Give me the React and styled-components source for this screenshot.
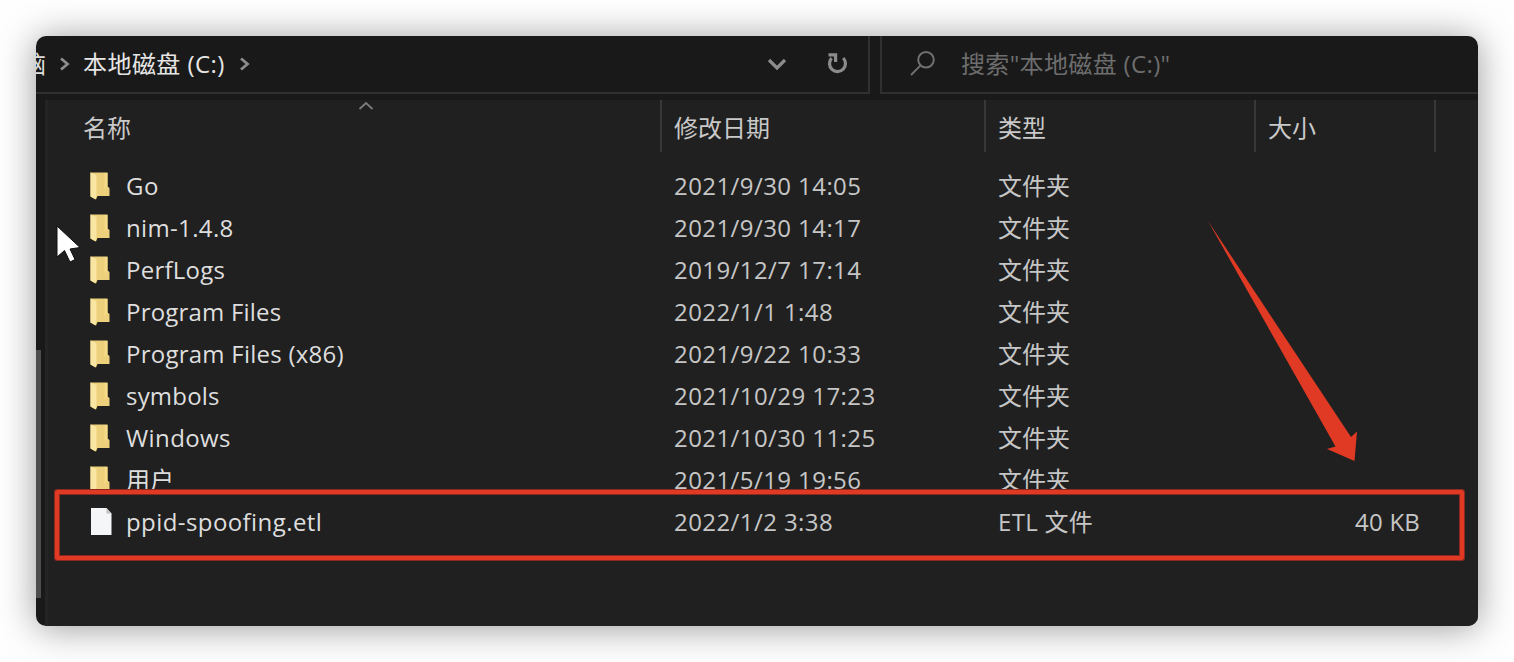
import React from 'react';
import styled, { createGlobalStyle } from 'styled-components';

const GlobalStyle = createGlobalStyle`
  * { box-sizing: border-box; }
  body {
    margin: 0;
    background: #fefefe;
    font-family: "Open Sans", "Noto Sans CJK SC", sans-serif;
  }
  svg { display: block; flex: none; }
`;

const Page = styled.div`
  height: 662px;
  padding: 36px;
  overflow: hidden;
`;

const Window = styled.main`
  position: relative;
  height: 590px;
  border-radius: 10px;
  box-shadow: 0 2px 36px rgba(0, 0, 0, 0.4);
`;

const Frame = styled.div`
  display: flex;
  flex-direction: column;
  height: 100%;
  overflow: hidden;
  border-radius: 10px;
  background: #191919;
`;

const Toolbar = styled.header`
  display: flex;
  gap: 10px;
  height: 58px;
  margin-bottom: 6px;
`;

const AddressBar = styled.nav`
  display: flex;
  align-items: center;
  width: 834px;
  height: 58px;
  padding-right: 19px;
  border-right: 2px solid #303030;
  border-bottom: 2px solid #303030;
`;

const SearchBox = styled.div`
  display: flex;
  flex: 1;
  align-items: center;
  height: 58px;
  padding-left: 27px;
  border-left: 2px solid #303030;
  border-bottom: 2px solid #303030;
`;

const Text = styled.span`
  display: block;
  font-size: 24px;
  line-height: 32px;
  white-space: pre;
  color: ${(p) => p.$color || '#dedede'};
  letter-spacing: ${(p) => p.$track || 0}px;
`;

const ParentCrumb = styled.div`
  display: flex;
  justify-content: flex-end;
  width: 10px;
  margin-right: 13px;
  overflow: hidden;
`;

const CurrentCrumb = styled.div`
  width: 148px;
  margin: 0 8px 0 12px;
`;

const Actions = styled.div`
  display: flex;
  align-items: center;
  gap: 40px;
  margin-left: auto;
`;

const SearchHint = styled.div`
  margin-left: 24px;
`;

const Body = styled.div`
  display: flex;
  flex: 1;
`;

const Rail = styled.div`
  width: 9px;
  padding-top: 250px;
`;

const Thumb = styled.div`
  width: 5px;
  height: 248px;
  background: #4d4d4d;
`;

const Pane = styled.section`
  flex: 1;
  border-left: 3px solid #242424;
  background: #202020;
`;

const COLUMNS = '614px 324px 270px 180px';

const HeaderRow = styled.div`
  display: grid;
  grid-template-columns: ${COLUMNS};
  height: 52px;
  margin-bottom: 13px;
`;

const HeaderCell = styled.div`
  position: relative;
  padding: 12px 0 0 ${(p) => (p.$first ? 35 : 12)}px;
  border-right: 2px solid #383838;
`;

const SortMark = styled.div`
  position: absolute;
  top: 1px;
  left: 309px;
`;

const Row = styled.div`
  display: grid;
  grid-template-columns: ${COLUMNS};
  align-items: center;
  height: 42px;
`;

const NameCell = styled.div`
  display: flex;
  align-items: center;
  gap: 14px;
  padding-left: 42px;
`;

const Cell = styled.div`
  padding-left: 12px;
`;

const SizeCell = styled.div`
  display: flex;
  justify-content: flex-end;
  padding-right: 16px;
`;

const Highlight = styled.div`
  position: absolute;
  left: 19px;
  top: 454px;
  width: 1409px;
  height: 70px;
  border: 4px solid #e03a24;
  border-radius: 2px;
  box-shadow: 0 0 0 1px #8a291f, inset 0 0 0 1px #8a291f;
`;

const Arrow = styled.svg`
  position: absolute;
  left: 1164px;
  top: 180px;
`;

const Pointer = styled.svg`
  position: absolute;
  left: 18px;
  top: 187px;
`;

function Chevron() {
  return (
    <svg width="12" height="18" viewBox="0 0 12 18" fill="none" stroke="#8c8c8c" strokeWidth="2.8">
      <path d="M2 3.5 L8.5 9 L2 14.5" />
    </svg>
  );
}

function FolderIcon() {
  return (
    <svg width="22" height="30" viewBox="0 0 22 30">
      <path d="M0.5 1.5 H17.5 V15.5 L19.5 17 V25 H7.5 L6 28.5 L0.5 25.5 Z" fill="#edd07b" />
      <path d="M0.5 1.5 L6.5 4 V23 L5.5 28.5 L0.5 25.5 Z" fill="#f9e6a2" />
      <path d="M14.5 2 H17.5 V15.5 L14.5 19 Z" fill="#f5da88" />
    </svg>
  );
}

function FileIcon() {
  return (
    <svg width="22" height="30" viewBox="0 0 22 30">
      <path d="M1 1 H16.5 L21.5 6.5 V28 H1 Z" fill="#f5f6f8" />
      <path d="M16.5 1 V6.5 H21.5 Z" fill="#bfc1c4" />
    </svg>
  );
}

const entries = [
  { name: 'Go', track: 0.6, date: '2021/9/30 14:05', type: '文件夹' },
  { name: 'nim-1.4.8', track: 0.35, date: '2021/9/30 14:17', type: '文件夹' },
  { name: 'PerfLogs', track: 0.25, date: '2019/12/7 17:14', type: '文件夹' },
  { name: 'Program Files', track: 0.2, date: '2022/1/1 1:48', type: '文件夹' },
  { name: 'Program Files (x86)', track: 0.25, date: '2021/9/22 10:33', type: '文件夹' },
  { name: 'symbols', track: 0.2, date: '2021/10/29 17:23', type: '文件夹' },
  { name: 'Windows', track: 0.4, date: '2021/10/30 11:25', type: '文件夹' },
  { name: '用户', date: '2021/5/19 19:56', type: '文件夹' },
  { name: 'ppid-spoofing.etl', track: 0.42, date: '2022/1/2 3:38', type: 'ETL 文件', size: '40 KB', file: true },
];

export default function App() {
  return (
    <>
      <GlobalStyle />
      <Page>
        <Window>
          <Frame>
            <Toolbar>
              <AddressBar>
                <ParentCrumb><Text>脑</Text></ParentCrumb>
                <Chevron />
                <CurrentCrumb><Text $color="#e6e6e6" $track={0.45}>本地磁盘 (C:)</Text></CurrentCrumb>
                <Chevron />
                <Actions>
                  <svg width="20" height="18" viewBox="0 0 20 18" fill="none" stroke="#8c8c8c" strokeWidth="3.2">
                    <path d="M2 5 L10 13 L18 5" />
                  </svg>
                  <svg width="22" height="26" viewBox="0 0 22 26" fill="none" stroke="#8c8c8c" strokeWidth="3.2">
                    <path d="M4.6 7.2 A8 8 0 1 0 16.2 7" />
                    <path d="M1.5 3.8 H8.6 V11" />
                  </svg>
                </Actions>
              </AddressBar>
              <SearchBox>
                <svg width="28" height="28" viewBox="0 0 28 28" fill="none" stroke="#707070" strokeWidth="2">
                  <circle cx="17" cy="9.8" r="7.8" />
                  <path d="M11.5 15.4 L2 25" />
                </svg>
                <SearchHint><Text $color="#6d6d6d" $track={0.35}>搜索"本地磁盘 (C:)"</Text></SearchHint>
              </SearchBox>
            </Toolbar>
            <Body>
              <Rail><Thumb /></Rail>
              <Pane>
                <HeaderRow>
                  <HeaderCell $first>
                    <Text $color="#c9c9c9">名称</Text>
                    <SortMark>
                      <svg width="18" height="10" viewBox="0 0 18 10" fill="none" stroke="#7c7c7c" strokeWidth="1.8">
                        <path d="M2.5 8 L9 2 L15.5 8" />
                      </svg>
                    </SortMark>
                  </HeaderCell>
                  <HeaderCell><Text $color="#c9c9c9">修改日期</Text></HeaderCell>
                  <HeaderCell><Text $color="#c9c9c9">类型</Text></HeaderCell>
                  <HeaderCell><Text $color="#c9c9c9">大小</Text></HeaderCell>
                </HeaderRow>
                {entries.map((e) => (
                  <Row key={e.name}>
                    <NameCell>
                      {e.file ? <FileIcon /> : <FolderIcon />}
                      <Text $track={e.track}>{e.name}</Text>
                    </NameCell>
                    <Cell><Text $color="#c6c6c6" $track={0.42}>{e.date}</Text></Cell>
                    <Cell><Text $color="#c6c6c6" $track={e.file ? 0.3 : 0}>{e.type}</Text></Cell>
                    {e.size && <SizeCell><Text $color="#c6c6c6" $track={0.2}>{e.size}</Text></SizeCell>}
                  </Row>
                ))}
              </Pane>
            </Body>
          </Frame>
          <Highlight />
          <Arrow width="170" height="250" viewBox="1200 216 170 250">
            <path d="M1208 221 L1351 437 L1357 431.5 L1354.5 461 L1327 449 L1335.5 446.5 Z" fill="#e03a24" />
          </Arrow>
          <Pointer width="28" height="42" viewBox="54 223 28 42">
            <path d="M57 226 V257 L64.5 250.5 L70 262 L75 259.5 L70 249 L80 247.5 Z" fill="#fff" stroke="#111" strokeWidth="1" />
          </Pointer>
        </Window>
      </Page>
    </>
  );
}
